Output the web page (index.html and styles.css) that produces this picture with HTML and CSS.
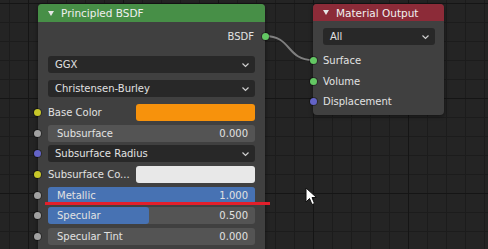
FILE: index.html
```html
<!DOCTYPE html>
<html lang="en">

<head>
    <meta charset="UTF-8">
    <title>Shader Editor</title>
    <link rel="stylesheet" href="styles.css">
</head>

<body>
    <div id="editor">
        <svg class="links" width="488" height="249">
            <path d="M265 36 C 292 36, 286 60, 313 60" />
        </svg>

        <!-- Principled BSDF node -->
        <div class="node node-bsdf">
            <div class="node-head">
                <svg class="collapse" width="6" height="5"><path d="M0 0 L6 0 L3 5 Z" /></svg>
                Principled BSDF
            </div>
            <div class="node-body">
                <div class="row out-row">BSDF<span class="socket out green"></span></div>

                <div class="dropdown first">GGX
                    <svg class="chevron" width="7" height="5"><path d="M0.5 0.5 L3.5 3.5 L6.5 0.5" /></svg>
                </div>
                <div class="dropdown">Christensen-Burley
                    <svg class="chevron" width="7" height="5"><path d="M0.5 0.5 L3.5 3.5 L6.5 0.5" /></svg>
                </div>

                <div class="inputs">
                    <div class="row color-row">
                        <span class="socket yellow"></span>
                        <span class="label">Base Color</span>
                        <span class="swatch orange"></span>
                    </div>
                    <div class="row slider">
                        <span class="socket gray"></span>
                        <span class="label">Subsurface</span>
                        <span class="value">0.000</span>
                    </div>
                    <div class="row dropdown">
                        <span class="socket purple"></span>
                        Subsurface Radius
                        <svg class="chevron" width="7" height="5"><path d="M0.5 0.5 L3.5 3.5 L6.5 0.5" /></svg>
                    </div>
                    <div class="row color-row">
                        <span class="socket yellow"></span>
                        <span class="label">Subsurface Co...</span>
                        <span class="swatch white"></span>
                    </div>
                    <div class="row slider">
                        <span class="socket gray"></span>
                        <span class="fill" style="width:100%"></span>
                        <span class="label">Metallic</span>
                        <span class="value">1.000</span>
                    </div>
                    <div class="row slider">
                        <span class="socket gray"></span>
                        <span class="fill" style="width:49%"></span>
                        <span class="label">Specular</span>
                        <span class="value">0.500</span>
                    </div>
                    <div class="row slider">
                        <span class="socket gray"></span>
                        <span class="label">Specular Tint</span>
                        <span class="value">0.000</span>
                    </div>
                </div>
            </div>
        </div>

        <!-- Material Output node -->
        <div class="node node-output">
            <div class="node-head">
                <svg class="collapse" width="6" height="5"><path d="M0 0 L6 0 L3 5 Z" /></svg>
                Material Output
            </div>
            <div class="node-body">
                <div class="dropdown first">All
                    <svg class="chevron" width="7" height="5"><path d="M0.5 0.5 L3.5 3.5 L6.5 0.5" /></svg>
                </div>
                <div class="sockets">
                    <div class="row"><span class="socket green"></span>Surface</div>
                    <div class="row"><span class="socket green"></span>Volume</div>
                    <div class="row"><span class="socket purple"></span>Displacement</div>
                </div>
            </div>
        </div>

        <div class="underline"></div>

        <svg class="cursor" width="14" height="20">
            <path d="M1 1 L1 15 L4.5 11.5 L7 17.5 L9.5 16.5 L7 10.5 L11.5 10.5 Z" />
        </svg>
    </div>
</body>

</html>
```

FILE: styles.css
```css
body {
    margin: 0;
    font-family: "DejaVu Sans", sans-serif;
    font-size: 10px;
    color: #e2e2e2;
}

#editor {
    position: relative;
    width: 488px;
    height: 249px;
    overflow: hidden;
    background:
        linear-gradient(to right, #151515 1px, transparent 1px) 28px 0 / 95px 100%,
        linear-gradient(to bottom, #151515 1px, transparent 1px) 0 3px / 100% 95px,
        linear-gradient(to right, #1c1c1c 1px, transparent 1px) 9px 0 / 19px 100%,
        linear-gradient(to bottom, #1c1c1c 1px, transparent 1px) 0 3px / 100% 19px,
        #242424;
}

.links {
    position: absolute;
    left: 0;
    top: 0;
}

.links path {
    fill: none;
    stroke: #7f7f7f;
    stroke-width: 2;
}

/* nodes */
.node {
    position: absolute;
    top: 4px;
    background-color: #404040;
    border-radius: 4px;
    box-shadow: 0 1px 4px rgba(0, 0, 0, 0.5);
}

.node-bsdf {
    left: 38px;
    width: 227px;
    height: 262px;
}

.node-output {
    left: 313px;
    width: 131px;
    height: 111px;
}

.node-head {
    display: flex;
    align-items: center;
    height: 18px;
    padding-left: 10px;
    border-radius: 4px 4px 0 0;
    color: #f0f0f0;
    font-size: 10.5px;
}

.node-bsdf .node-head {
    background-color: #478f47;
}

.node-output .node-head {
    height: 17px;
    background-color: #8c2b38;
}

.collapse {
    margin-right: 7px;
}

.collapse path {
    fill: #e6e6e6;
}

.node-body {
    padding: 6px 10px 0;
}

.node-output .node-body {
    padding: 7px 9px 0 10px;
}

/* rows */
.row {
    position: relative;
    display: flex;
    align-items: center;
    height: 17px;
}

.out-row {
    justify-content: flex-end;
    padding-right: 1px;
    margin-bottom: 11px;
}

.dropdown {
    position: relative;
    display: flex;
    align-items: center;
    height: 17px;
    padding-left: 7px;
    margin-bottom: 7px;
    background-color: #282828;
    border-radius: 3px;
}

.inputs .dropdown {
    margin-bottom: 0;
}

.chevron {
    position: absolute;
    right: 6px;
    top: 7px;
}

.chevron path {
    fill: none;
    stroke: #cfcfcf;
    stroke-width: 1.2;
}

.inputs {
    display: flex;
    flex-direction: column;
    gap: 3.7px;
}

.color-row .label {
    flex: 1;
}

.swatch {
    width: 119px;
    height: 17px;
    border-radius: 3px;
}

.orange {
    background-color: #f7920c;
}

.white {
    background-color: #e8e8e8;
}

.slider {
    justify-content: space-between;
    padding: 0 7px 0 9px;
    background-color: #545454;
    border-radius: 3px;
}

.slider .fill {
    position: absolute;
    left: 0;
    top: 0;
    height: 100%;
    background-color: #4772b3;
    border-radius: 3px;
}

.slider .label,
.slider .value {
    position: relative;
}

/* sockets */
.socket {
    position: absolute;
    left: -14px;
    top: 5px;
    width: 7px;
    height: 7px;
    border-radius: 50%;
    box-shadow: 0 0 0 1px rgba(0, 0, 0, 0.35);
}

.socket.out {
    left: auto;
    right: -14px;
}

.green {
    background-color: #63c763;
}

.yellow {
    background-color: #c7c729;
}

.gray {
    background-color: #a1a1a1;
}

.purple {
    background-color: #6363c7;
}

.sockets {
    display: flex;
    flex-direction: column;
    gap: 3.5px;
}

.sockets .row {
    padding-left: 0;
}

.sockets .socket {
    left: -13.5px;
}

/* overlays */
.underline {
    position: absolute;
    left: 45px;
    top: 202px;
    width: 225px;
    height: 3px;
    background-color: #e21f2b;
}

.cursor {
    position: absolute;
    left: 305px;
    top: 187px;
}

.cursor path {
    fill: #ffffff;
    stroke: #111111;
    stroke-width: 1;
}
```
